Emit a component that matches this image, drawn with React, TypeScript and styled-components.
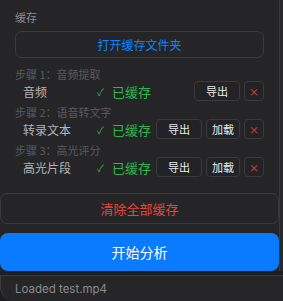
import React from "react";
import styled, { createGlobalStyle } from "styled-components";

const Global = createGlobalStyle`
  html, body { margin: 0; padding: 0; background: #1d1d1f; }
  body { font-family: "Noto Sans CJK SC", "Noto Sans", sans-serif; -webkit-font-smoothing: antialiased; }
  * { box-sizing: border-box; }
`;

const Root = styled.div`
  width: 283px;
  height: 301px;
  display: flex;
  flex-direction: column;
  overflow: hidden;
  background: #1d1d1f;
`;

const Main = styled.div`
  display: flex;
  height: 271px;
`;

const Content = styled.div`
  width: 279px;
  background: #252527;
  display: flex;
  flex-direction: column;
`;

const ScrollStrip = styled.div`
  flex: 1;
  border-left: 1px solid #38383a;
  background: #29292b;
`;

const Section = styled.div`
  padding: 10px 15px 0 15px;
  display: flex;
  flex-direction: column;
`;

const SectionTitle = styled.div`
  font-size: 11px;
  line-height: 14px;
  color: #8a8a8e;
`;

const OpenButton = styled.button`
  margin-top: 7px;
  height: 27px;
  border: 1px solid #3c3c3e;
  border-radius: 7px;
  background: transparent;
  color: #0a84ff;
  font-family: inherit;
  font-size: 12px;
  padding: 0;
`;

const StepLabel = styled.div<{ $first?: boolean }>`
  margin-top: ${(p) => (p.$first ? 9 : 4)}px;
  font-size: 11px;
  line-height: 14px;
  color: #5a5a5e;
  white-space: nowrap;
`;

const Row = styled.div`
  height: 20px;
  display: flex;
  align-items: center;
  padding-left: 8px;
`;

const Name = styled.div`
  width: 74px;
  font-size: 12px;
  color: #b4b4b8;
  white-space: nowrap;
`;

const Status = styled.div`
  display: flex;
  align-items: center;
  color: #31b550;
  white-space: nowrap;
`;

const Check = styled.span`
  font-size: 10px;
  width: 15px;
`;

const StatusText = styled.span`
  font-size: 13px;
`;

const Actions = styled.div`
  margin-left: auto;
  display: flex;
  gap: 4px;
`;

const SmallButton = styled.button<{ $w: number; $danger?: boolean }>`
  width: ${(p) => p.$w}px;
  height: 20px;
  border: 1px solid #3a3a3c;
  border-radius: 4px;
  background: #232325;
  color: ${(p) => (p.$danger ? "#e5443b" : "#ececee")};
  font-family: inherit;
  font-size: ${(p) => (p.$danger ? 10 : 11)}px;
  padding: 0;
  display: flex;
  align-items: center;
  justify-content: center;
`;

const WideButton = styled.button<{ $primary?: boolean }>`
  width: 279px;
  height: ${(p) => (p.$primary ? 38 : 31)}px;
  margin-top: ${(p) => (p.$primary ? 9 : 16)}px;
  border: ${(p) => (p.$primary ? "none" : "1px solid #3a3a3c")};
  border-radius: ${(p) => (p.$primary ? 8 : 7)}px;
  background: ${(p) => (p.$primary ? "#0a7aff" : "transparent")};
  color: ${(p) => (p.$primary ? "#ffffff" : "#e5443b")};
  font-family: inherit;
  font-size: ${(p) => (p.$primary ? 14 : 13)}px;
  padding: 0;
`;

const Band = styled.div`
  height: 4px;
  background: #1e1e20;
`;

const Footer = styled.div`
  flex: 1;
  border-top: 1px solid #38383a;
  border-left: 1px solid #3a3a3c;
  border-bottom-left-radius: 14px;
  background: #262628;
  display: flex;
  align-items: center;
  padding-left: 14px;
  font-family: Inter, "Noto Sans", sans-serif;
  font-size: 11.5px;
  color: #8a8a8e;
`;

type Step = { label: string; name: string; load: boolean };

const steps: Step[] = [
  { label: "步骤 1：音频提取", name: "音频", load: false },
  { label: "步骤 2：语音转文字", name: "转录文本", load: true },
  { label: "步骤 3：高光评分", name: "高光片段", load: true },
];

export default function App() {
  return (
    <Root>
      <Global />
      <Main>
        <Content>
          <Section>
            <SectionTitle>缓存</SectionTitle>
            <OpenButton>打开缓存文件夹</OpenButton>
            {steps.map((s, i) => (
              <React.Fragment key={s.name}>
                <StepLabel $first={i === 0}>{s.label}</StepLabel>
                <Row>
                  <Name>{s.name}</Name>
                  <Status>
                    <Check>✓</Check>
                    <StatusText>已缓存</StatusText>
                  </Status>
                  <Actions>
                    <SmallButton $w={46}>导出</SmallButton>
                    {s.load && <SmallButton $w={34}>加载</SmallButton>}
                    <SmallButton $w={20} $danger>
                      ×
                    </SmallButton>
                  </Actions>
                </Row>
              </React.Fragment>
            ))}
          </Section>
          <WideButton>清除全部缓存</WideButton>
          <WideButton $primary>开始分析</WideButton>
        </Content>
        <ScrollStrip />
      </Main>
      <Band />
      <Footer>Loaded test.mp4</Footer>
    </Root>
  );
}
